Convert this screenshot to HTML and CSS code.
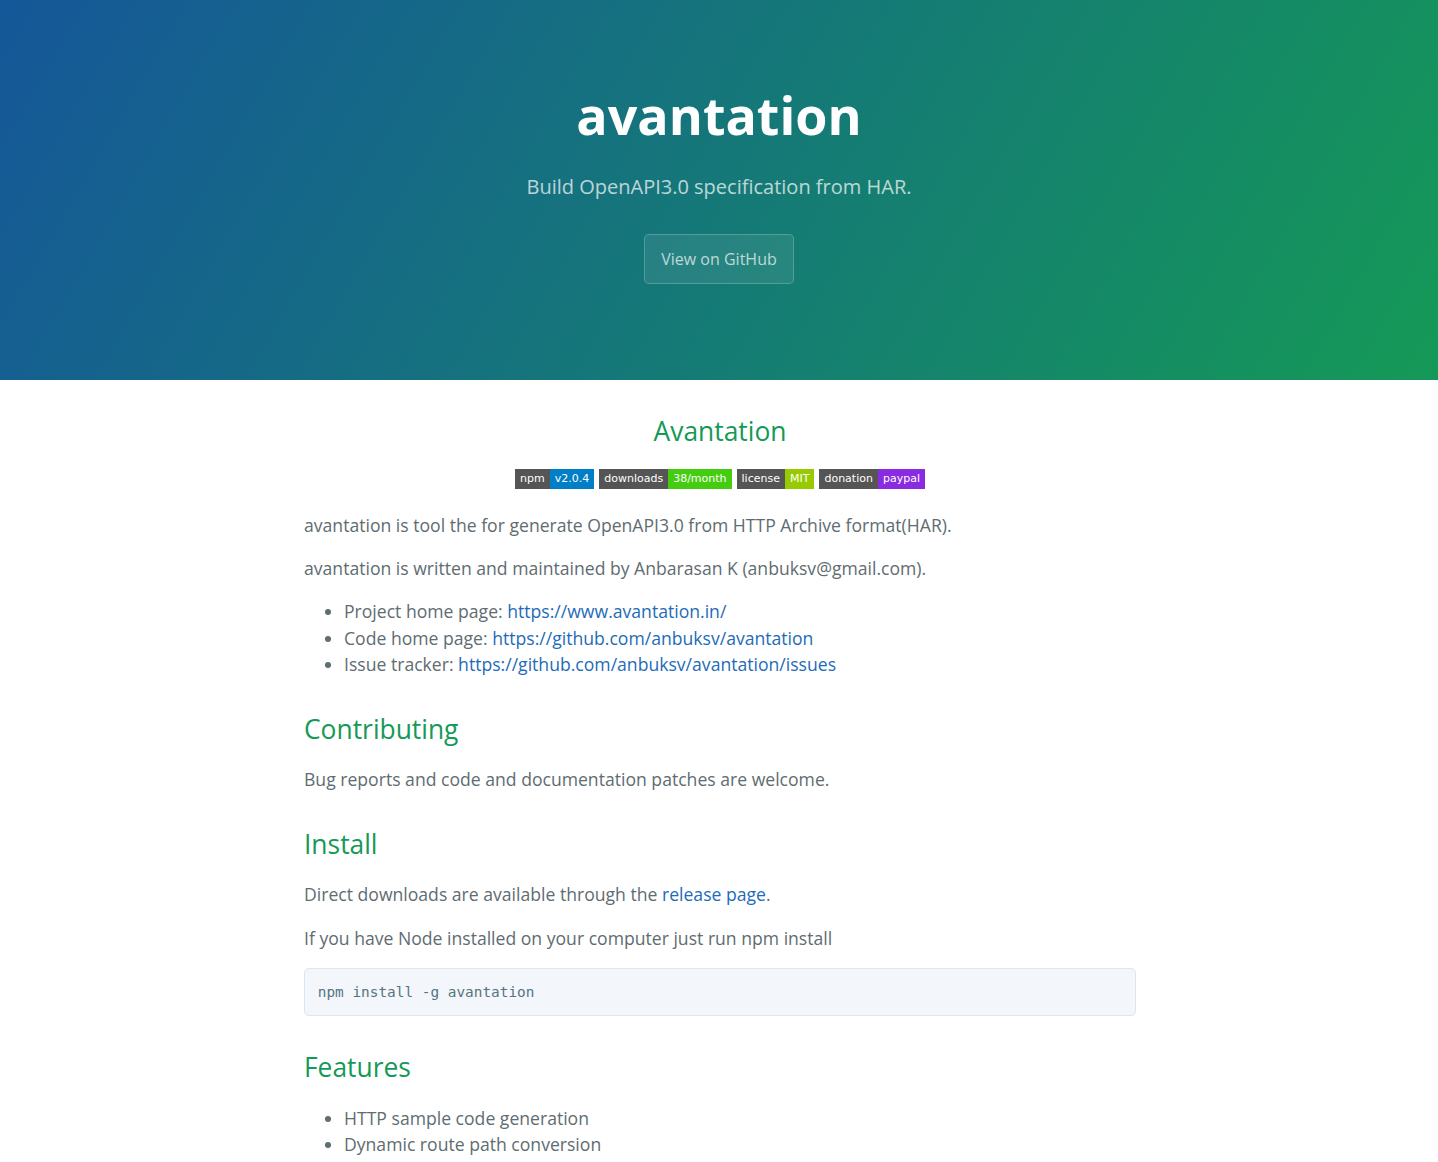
FILE: index.html
```html
<!DOCTYPE html>
<html lang="en">
<head>
<meta charset="UTF-8">
<title>avantation</title>
<link rel="stylesheet" href="styles.css">
</head>
<body>
<section class="page-header">
  <h1 class="project-name">avantation</h1>
  <h2 class="project-tagline">Build OpenAPI3.0 specification from HAR.</h2>
  <a class="btn" href="#">View on GitHub</a>
</section>
<section class="main-content">
  <h2 class="center">Avantation</h2>
  <p class="center badges"><span class="badge"><span class="bl">npm</span><span class="bv blue">v2.0.4</span></span> <span class="badge"><span class="bl">downloads</span><span class="bv green">38/month</span></span> <span class="badge"><span class="bl">license</span><span class="bv yg">MIT</span></span> <span class="badge"><span class="bl">donation</span><span class="bv purple">paypal</span></span></p>
  <p>avantation is tool the for generate OpenAPI3.0 from HTTP Archive format(HAR).</p>
  <p>avantation is written and maintained by Anbarasan K (anbuksv@gmail.com).</p>
  <ul>
    <li>Project home page: <a href="#">https://www.avantation.in/</a></li>
    <li>Code home page: <a href="#">https://github.com/anbuksv/avantation</a></li>
    <li>Issue tracker: <a href="#">https://github.com/anbuksv/avantation/issues</a></li>
  </ul>
  <h2>Contributing</h2>
  <p>Bug reports and code and documentation patches are welcome.</p>
  <h2>Install</h2>
  <p>Direct downloads are available through the <a href="#">release page</a>.</p>
  <p>If you have Node installed on your computer just run npm install</p>
  <pre><code>npm install -g avantation</code></pre>
  <h2>Features</h2>
  <ul>
    <li>HTTP sample code generation</li>
    <li>Dynamic route path conversion</li>
    <li>Schema generation</li>
    <li>Security schemes</li>
  </ul>
</section>
</body>
</html>
```
FILE: styles.css
```css
* { box-sizing: border-box; }
body {
  margin: 0;
  padding: 0;
  font-family: "Open Sans", "Liberation Sans", sans-serif;
  font-size: 16px;
  line-height: 1.5;
  color: #606c71;
}
a { color: #1e6bb8; text-decoration: none; }

.page-header {
  color: #fff;
  text-align: center;
  background-color: #159957;
  background-image: linear-gradient(120deg, #155799, #159957);
  padding: 76px 6rem 0;
  height: 380px;
}
.project-name {
  margin: 0 0 17.6px;
  font-size: 3.25rem;
  font-weight: 700;
  line-height: 1.5;
}
.project-tagline {
  margin: 0 0 2rem;
  font-size: 1.25rem;
  font-weight: 400;
  opacity: 0.7;
  line-height: 1.5;
}
.btn {
  display: inline-block;
  padding: 0.75rem 1rem;
  color: rgba(255, 255, 255, 0.7);
  background-color: rgba(255, 255, 255, 0.08);
  border: 1px solid rgba(255, 255, 255, 0.2);
  border-radius: 0.3rem;
  font-size: 1rem;
  line-height: 1.5;
}

.main-content {
  max-width: 64rem;
  padding: 2rem 95px 2rem 97px;
  margin: 0 auto;
  font-size: 1.1rem;
  word-wrap: break-word;
}
.main-content h2 {
  margin-top: 2rem;
  margin-bottom: 1rem;
  font-weight: 400;
  color: #159957;
  font-size: 1.5em;
  line-height: 1.5;
}
.main-content > :first-child { margin-top: 0; }
.main-content p { margin: 17px 0; }
.main-content ul { margin: 17px 0; padding-left: 40px; }
.center { text-align: center; }

.badges { height: 26px; display: flex; justify-content: center; gap: 5px; align-items: flex-start; }
.badge {
  display: inline-flex;
  height: 20px;
  font-family: "DejaVu Sans", Verdana, sans-serif;
  font-size: 11px;
  line-height: 20px;
  color: #fff;
}
.bl, .bv { padding: 0 5px; }
.bl { background: #555; }
.blue { background: #007ec6; }
.green { background: #44cc11; }
.yg { background: #97ca00; }
.purple { background: #8a2be2; }

.main-content pre {
  padding: 0.8rem;
  margin: 0 0 1rem;
  background-color: #f3f6fa;
  border: 1px solid #dce6f0;
  border-radius: 0.3rem;
  font-family: "DejaVu Sans Mono", "Liberation Mono", monospace;
  font-size: 1rem;
  line-height: 20.5px;
  color: #567482;
}
.main-content pre code {
  font-family: inherit;
  font-size: 0.9rem;
  color: #567482;
}
```
